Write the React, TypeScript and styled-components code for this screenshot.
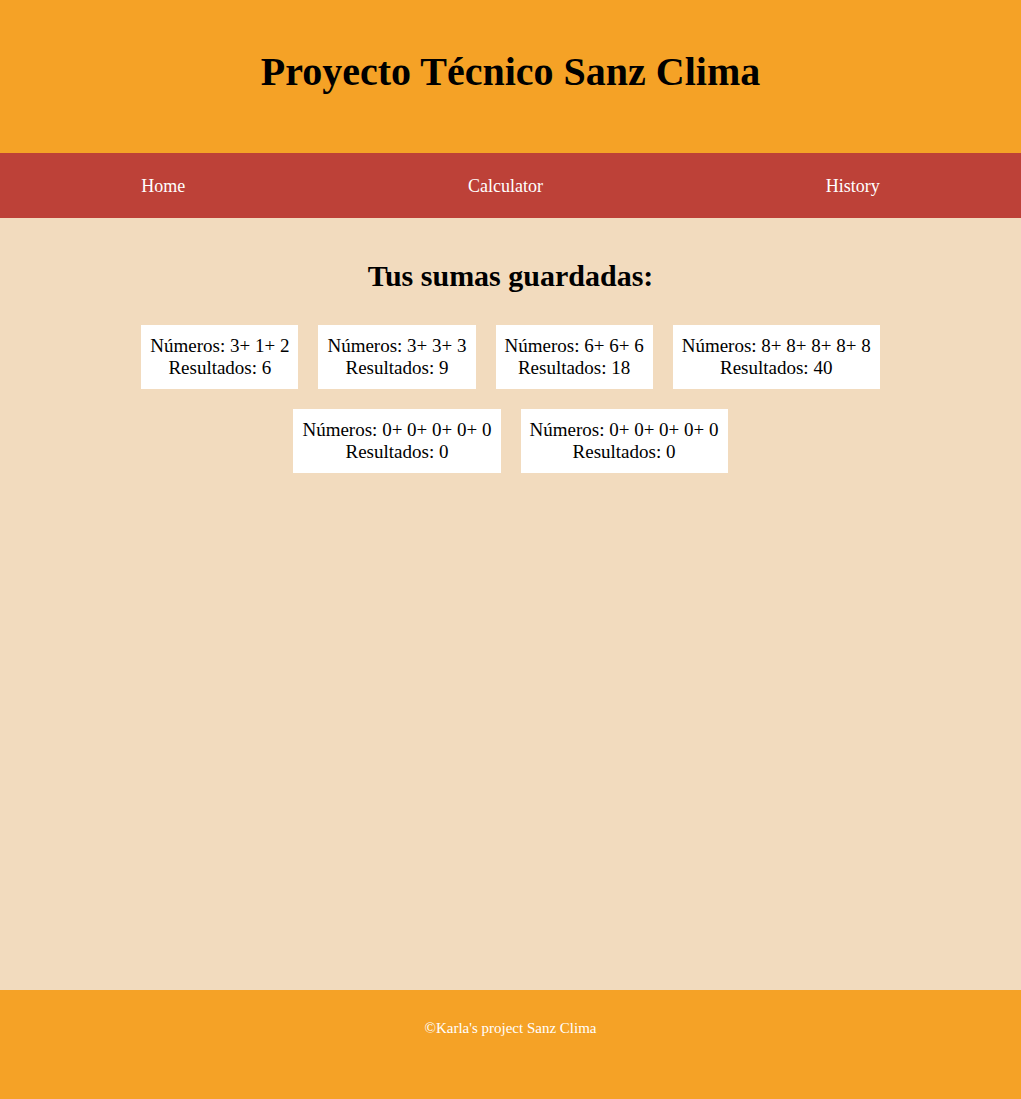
import React from "react";
import styled, { createGlobalStyle } from "styled-components";

const GlobalStyle = createGlobalStyle`
  html, body {
    margin: 0;
    padding: 0;
  }
  body {
    font-family: "Liberation Serif", "Times New Roman", serif;
    background: #f2dbbe;
  }
`;

const Page = styled.div`
  min-height: 100vh;
  display: flex;
  flex-direction: column;
`;

const Header = styled.header`
  background: #f5a226;
  height: 153px;
  box-sizing: border-box;
  padding-top: 48px;
  text-align: center;
`;

const Title = styled.h1`
  margin: 0;
  font-size: 40px;
  font-weight: bold;
  color: #000;
`;

const Nav = styled.nav`
  background: #bd4138;
  height: 65px;
  box-sizing: border-box;
  padding-top: 2px;
  display: flex;
  align-items: center;
  justify-content: space-around;
`;

const NavLink = styled.a`
  color: #fff;
  font-size: 18px;
  text-decoration: none;
  cursor: pointer;
`;

const Main = styled.main`
  flex: 1;
  background: #f2dbbe;
  padding-top: 41px;
  display: flex;
  flex-direction: column;
  align-items: center;
`;

const Heading = styled.h2`
  margin: 0 0 32px;
  font-size: 30px;
  font-weight: bold;
  color: #000;
`;

const CardList = styled.div`
  display: flex;
  flex-wrap: wrap;
  justify-content: center;
  gap: 20px;
  max-width: 800px;
`;

const Card = styled.div`
  background: #fff;
  padding: 10px 9px;
  font-size: 19px;
  line-height: 22px;
  text-align: center;
  color: #000;
`;

const Footer = styled.footer`
  background: #f5a226;
  height: 109px;
  box-sizing: border-box;
  padding-top: 30px;
  text-align: center;
`;

const FooterText = styled.p`
  margin: 0;
  color: #fff;
  font-size: 15px;
`;

const sums = [
  { nums: [3, 1, 2], result: 6 },
  { nums: [3, 3, 3], result: 9 },
  { nums: [6, 6, 6], result: 18 },
  { nums: [8, 8, 8, 8, 8], result: 40 },
  { nums: [0, 0, 0, 0, 0], result: 0 },
  { nums: [0, 0, 0, 0, 0], result: 0 },
];

export default function App() {
  return (
    <Page>
      <GlobalStyle />
      <Header>
        <Title>Proyecto Técnico Sanz Clima</Title>
      </Header>
      <Nav>
        <NavLink>Home</NavLink>
        <NavLink>Calculator</NavLink>
        <NavLink>History</NavLink>
      </Nav>
      <Main>
        <Heading>Tus sumas guardadas:</Heading>
        <CardList>
          {sums.map((s, i) => (
            <Card key={i}>
              <div>Números: {s.nums.join("+ ")}</div>
              <div>Resultados: {s.result}</div>
            </Card>
          ))}
        </CardList>
      </Main>
      <Footer>
        <FooterText>©Karla's project Sanz Clima</FooterText>
      </Footer>
    </Page>
  );
}
